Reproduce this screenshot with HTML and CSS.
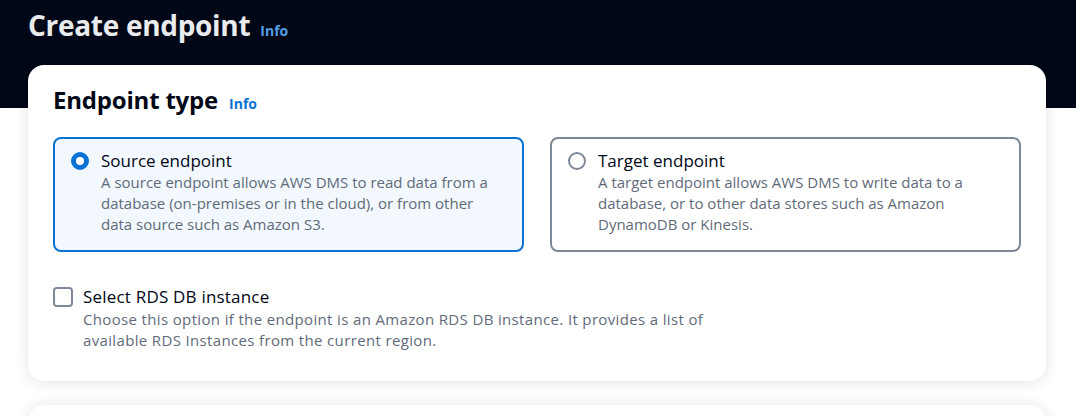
FILE: index.html
```html
<!DOCTYPE html>
<html lang="en">
<head>
<meta charset="utf-8">
<title>Create endpoint</title>
<link rel="stylesheet" href="styles.css">
</head>
<body>
<header class="page-header">
  <h1 class="page-title">Create endpoint <a class="info info-dark" href="#">Info</a></h1>
</header>
<main class="content">
  <section class="card">
    <h2 class="card-title">Endpoint type <a class="info" href="#">Info</a></h2>
    <div class="tiles">
      <label class="tile tile-selected">
        <span class="radio radio-on"></span>
        <span class="tile-text">
          <span class="tile-label">Source endpoint</span>
          <span class="tile-desc">A source endpoint allows AWS DMS to read data from a<br>database (on-premises or in the cloud), or from other<br>data source such as Amazon S3.</span>
        </span>
      </label>
      <label class="tile">
        <span class="radio"></span>
        <span class="tile-text">
          <span class="tile-label">Target endpoint</span>
          <span class="tile-desc">A target endpoint allows AWS DMS to write data to a<br>database, or to other data stores such as Amazon<br>DynamoDB or Kinesis.</span>
        </span>
      </label>
    </div>
    <label class="check-row">
      <span class="checkbox"></span>
      <span class="check-text">
        <span class="check-label">Select RDS DB instance</span>
        <span class="check-desc">Choose this option if the endpoint is an Amazon RDS DB instance. It provides a list of<br>available RDS Instances from the current region.</span>
      </span>
    </label>
  </section>
  <section class="card card-next"></section>
</main>
</body>
</html>
```
FILE: styles.css
```css
* { box-sizing: border-box; }
html, body { margin: 0; padding: 0; }
body {
  width: 1076px;
  height: 416px;
  overflow: hidden;
  font-family: "Open Sans", "Noto Sans", Arial, sans-serif;
  color: #000716;
  background: linear-gradient(#000716 0, #000716 108px, #ffffff 108px);
}
.page-header {
  padding: 5px 28px 0 28px;
  height: 65px;
}
.page-title {
  margin: 0;
  font-size: 28px;
  line-height: 40px;
  font-weight: 700;
  color: #e9ebed;
  letter-spacing: -0.3px;
  display: flex;
  align-items: baseline;
  gap: 10px;
}
.info {
  font-size: 14px;
  line-height: 20px;
  font-weight: 700;
  color: #0972d3;
  text-decoration: none;
  letter-spacing: 0;
}
.info-dark { color: #539fe5; }
.content {
  padding: 0 30px 0 28px;
}
.card {
  background: #ffffff;
  border-radius: 16px;
  box-shadow: 0 1px 14px 1px rgba(0, 7, 22, 0.1);
  padding: 20px 25px 30px 25px;
}
.card-next {
  margin-top: 24px;
  height: 12px;
}
.card-title {
  margin: 0 0 22px 0;
  height: 30px;
  font-size: 24px;
  line-height: 30px;
  font-weight: 700;
  letter-spacing: -0.2px;
  display: flex;
  align-items: baseline;
  gap: 11px;
}
.tiles {
  display: grid;
  grid-template-columns: 1fr 1fr;
  gap: 26px;
}
.tile {
  display: flex;
  gap: 12px;
  border: 2px solid #7d8998;
  border-radius: 8px;
  padding: 11px 16px 15px 16px;
  background: #ffffff;
  cursor: pointer;
}
.tile-selected {
  border-color: #0972d3;
  background: #f2f8fd;
}
.radio {
  flex: none;
  width: 18px;
  height: 18px;
  margin-top: 2px;
  border-radius: 50%;
  border: 2px solid #7d8998;
  background: #ffffff;
}
.radio-on {
  border: 5px solid #0972d3;
}
.tile-text, .check-text {
  display: flex;
  flex-direction: column;
}
.tile-label, .check-label {
  font-size: 17px;
  line-height: 22px;
  color: #000716;
}
.check-label { letter-spacing: 0.2px; }
.tile-desc, .check-desc {
  font-size: 15px;
  line-height: 21px;
  color: #5f6b7a;
}
.check-desc {
  letter-spacing: 0.35px;
  margin-top: 1px;
}
.check-row {
  display: flex;
  gap: 10px;
  margin-top: 34px;
}
.checkbox {
  flex: none;
  width: 20px;
  height: 20px;
  margin-top: 1px;
  border: 2px solid #7d8998;
  border-radius: 4px;
  background: #ffffff;
}
```
